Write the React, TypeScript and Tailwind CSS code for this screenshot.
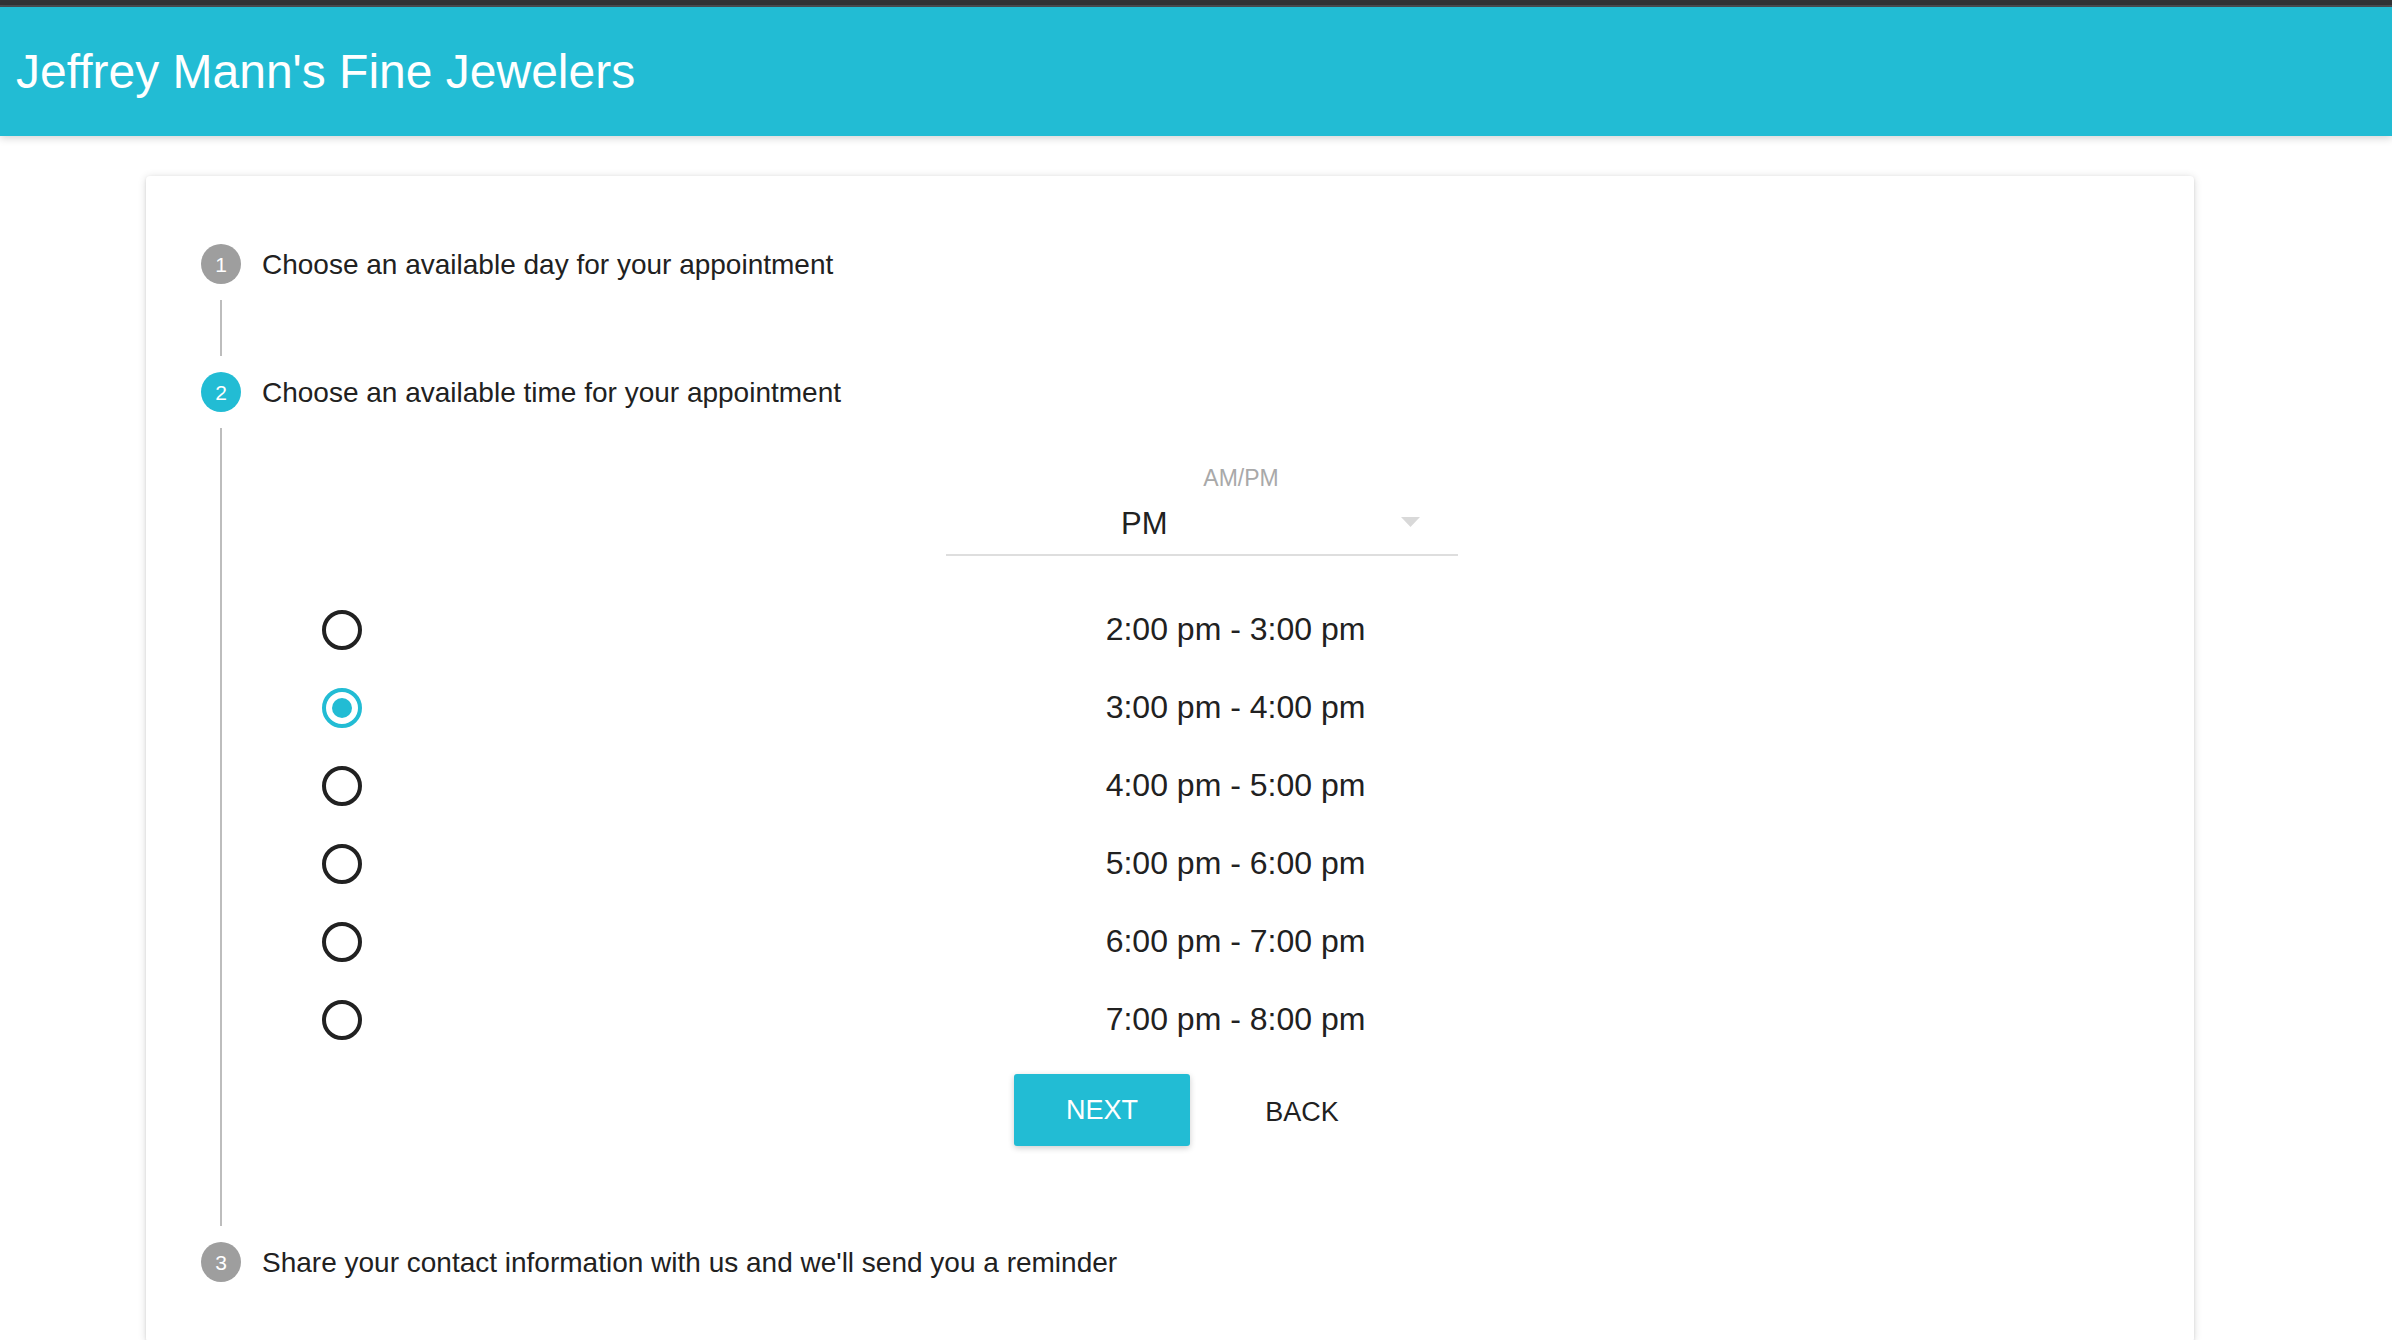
import React, { useState } from 'react';

const times = [
  '2:00 pm - 3:00 pm',
  '3:00 pm - 4:00 pm',
  '4:00 pm - 5:00 pm',
  '5:00 pm - 6:00 pm',
  '6:00 pm - 7:00 pm',
  '7:00 pm - 8:00 pm',
];

const StepBadge: React.FC<{ n: number; active?: boolean }> = ({ n, active }) => (
  <div
    className={`w-[40px] h-[40px] shrink-0 rounded-full flex items-center justify-center text-white text-[21px] leading-none ${
      active ? 'bg-[#22bcd4]' : 'bg-[#9e9e9e]'
    }`}
  >
    {n}
  </div>
);

const StepRow: React.FC<{ n: number; active?: boolean; label: string }> = ({ n, active, label }) => (
  <div className="flex items-center h-[40px]">
    <StepBadge n={n} active={active} />
    <span className="ml-[21px] pt-[2px] text-[28px] leading-[28px] text-[#212121]">{label}</span>
  </div>
);

const Radio: React.FC<{ checked: boolean }> = ({ checked }) =>
  checked ? (
    <div className="w-[40px] h-[40px] shrink-0 rounded-full border-[4px] border-[#22bcd4] flex items-center justify-center">
      <div className="w-[20px] h-[20px] rounded-full bg-[#22bcd4]" />
    </div>
  ) : (
    <div className="w-[40px] h-[40px] shrink-0 rounded-full border-[4px] border-[#212121]" />
  );

const App: React.FC = () => {
  const [selected, setSelected] = useState(1);

  return (
    <div
      className="min-h-[1340px] bg-white text-[#212121]"
      style={{ fontFamily: '"Liberation Sans", Arial, Helvetica, sans-serif' }}
    >
      <div className="h-[5px] bg-[#323336]" />
      <div className="h-[2px] bg-[#4b4d51]" />
      <header className="h-[129px] bg-[#22bcd4] flex items-center pl-[16px] shadow-[0_2px_8px_rgba(0,0,0,0.18)] relative">
        <h1 className="text-white text-[48px] leading-none font-normal">Jeffrey Mann's Fine Jewelers</h1>
      </header>

      <div className="mt-[40px] ml-[146px] w-[2048px] bg-white rounded-[4px] shadow-[0_1px_8px_rgba(0,0,0,0.14),0_1px_3px_rgba(0,0,0,0.10)] pt-[68px] pl-[55px] pr-[52px] pb-[60px]">
        <StepRow n={1} label="Choose an available day for your appointment" />
        <div className="flex h-[88px]">
          <div className="w-[61px] shrink-0 py-[16px]">
            <div className="ml-[19px] w-[2px] h-full bg-[#bdbdbd]" />
          </div>
        </div>

        <StepRow n={2} active label="Choose an available time for your appointment" />
        <div className="flex">
          <div className="w-[61px] shrink-0 py-[16px]">
            <div className="ml-[19px] w-[2px] h-full bg-[#bdbdbd]" />
          </div>
          <div className="flex-1 pt-[55px] pb-[96px]">
            <div className="w-[512px] mx-auto">
              <div className="pl-[78px] text-center text-[23px] leading-[23px] text-[#a9a9a9]">AM/PM</div>
              <div className="mt-[18px] flex items-center border-b-2 border-[#dedede] pb-[15px]">
                <span className="pl-[175px] flex-1 text-[31px] leading-[31px] text-[#212121]">PM</span>
                <svg width="19" height="10" viewBox="0 0 19 10" className="mr-[38px] -mt-[4px]">
                  <path d="M0 0 L19 0 L9.5 10 Z" fill="#d9d9d9" />
                </svg>
              </div>
            </div>

            <div className="mt-[35px] pl-[60px] pr-[33px]">
              {times.map((t, i) => (
                <div
                  key={t}
                  className="h-[78px] flex items-center cursor-pointer"
                  onClick={() => setSelected(i)}
                >
                  <Radio checked={selected === i} />
                  <span className="flex-1 -mt-[2px] text-center text-[32px] leading-[32px] text-[#212121]">{t}</span>
                </div>
              ))}
            </div>

            <div className="mt-[15px] flex justify-center gap-[24px]">
              <button
                type="button"
                className="w-[176px] h-[72px] rounded-[3px] bg-[#22bcd4] text-white text-[27px] leading-none shadow-[0_2px_6px_rgba(0,0,0,0.2)]"
              >
                NEXT
              </button>
              <button
                type="button"
                className="w-[176px] h-[72px] pt-[5px] text-[#212121] text-[27px] leading-none"
              >
                BACK
              </button>
            </div>
          </div>
        </div>

        <StepRow n={3} label="Share your contact information with us and we'll send you a reminder" />
      </div>
    </div>
  );
};

export default App;
